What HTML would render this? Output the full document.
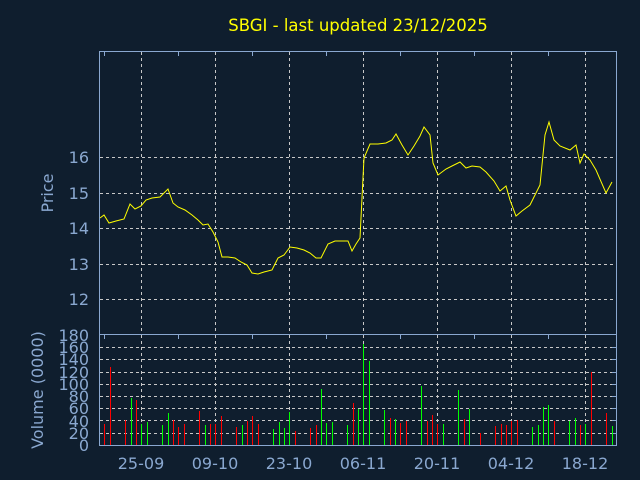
<!DOCTYPE html>
<html><head><style>
html,body{margin:0;padding:0;background:#0f1e2e;}
svg{display:block}
text{font-family:"DejaVu Sans","Liberation Sans",sans-serif;}
</style></head><body>
<svg width="640" height="480" viewBox="0 0 640 480" xmlns="http://www.w3.org/2000/svg">
<rect width="640" height="480" fill="#0f1e2e"/>
<text x="358" y="31" fill="#ffff00" font-size="16.5" text-anchor="middle">SBGI - last updated 23/12/2025</text>
<g stroke="#c8c8c8" stroke-width="1" stroke-dasharray="3,3" fill="none" shape-rendering="crispEdges">
<path d="M141.5 52V334M215.5 52V334M289.5 52V334M363.5 52V334M437.5 52V334M511.5 52V334M585.5 52V334"/>
<path d="M100 157.5H616M100 193.5H616M100 228.5H616M100 264.5H616M100 299.5H616"/>
<path d="M141.5 335V445M215.5 335V445M289.5 335V445M363.5 335V445M437.5 335V445M511.5 335V445M585.5 335V445"/>
<path d="M100 347.5H616M100 359.5H616M100 372.5H616M100 384.5H616M100 396.5H616M100 408.5H616M100 420.5H616M100 433.5H616"/>
</g>
<g stroke="#8aa8d0" stroke-width="1" fill="none" shape-rendering="crispEdges">
<rect x="99.5" y="51.5" width="517" height="394"/>
<path d="M99.5 334.5H616.5"/>
<path d="M104.5 52v4M178.5 52v4M252.5 52v4M326.5 52v4M400.5 52v4M474.5 52v4M548.5 52v4M104.5 335v4M178.5 335v4M252.5 335v4M326.5 335v4M400.5 335v4M474.5 335v4M548.5 335v4"/>
<path d="M612 347.5h4M612 359.5h4M612 372.5h4M612 384.5h4M612 396.5h4M612 408.5h4M612 420.5h4M612 433.5h4"/>
</g>
<polyline fill="none" stroke="#ffff00" stroke-width="1" points="100,218 104,215 109,223 116,221 124,219 130,204 135,209 141,206 146,200 152,198 160,197 164,193 168,189 173,203 178,207 185,210 192,215 198,220 203,225 208,224 213,232 218,242 222,257 228,257 235,258 241,262 247,265 252,273 258,274 264,272 272,270 278,258 284,255 290,247 297,248 304,250 310,253 316,258 321,258 328,244 335,241 342,241 348,241 352,251 356,244 360,238 364,158 370,144 378,144 386,143 392,140 396,134 402,145 408,155 414,146 420,136 424,127 430,135 433,163 438,175 446,169 452,166 460,162 466,168 472,166 480,167 486,172 494,181 500,191 506,186 510,200 516,216 522,211 530,205 535,195 540,185 545,135 549,122 554,140 560,146 570,150 576,145 580,163 584,154 590,160 596,170 606,193 612,182"/>
<g stroke-width="1" fill="none" shape-rendering="crispEdges">
<path stroke="#ff0000" d="M104.5 445V424M110.5 445V367M125.5 445V420M136.5 445V400M173.5 445V420M178.5 445V427M184.5 445V424M199.5 445V411M210.5 445V424M215.5 445V424M221.5 445V416M236.5 445V427M247.5 445V421M252.5 445V416M258.5 445V424M295.5 445V431M310.5 445V428M316.5 445V425M353.5 445V403M390.5 445V418M400.5 445V423M406.5 445V421M427.5 445V421M432.5 445V415M437.5 445V424M464.5 445V419M480.5 445V433M495.5 445V426M501.5 445V424M506.5 445V425M511.5 445V421M517.5 445V420M554.5 445V421M580.5 445V425M591.5 445V372M606.5 445V413"/>
<path stroke="#00ff00" d="M131.5 445V398M141.5 445V424M147.5 445V422M162.5 445V425M168.5 445V413M205.5 445V425M242.5 445V425M273.5 445V429M279.5 445V422M284.5 445V428M289.5 445V412M321.5 445V389M326.5 445V423M332.5 445V422M347.5 445V425M358.5 445V409M363.5 445V344M369.5 445V361M384.5 445V410M395.5 445V419M421.5 445V386M443.5 445V424M458.5 445V390M469.5 445V409M532.5 445V427M538.5 445V425M543.5 445V407M548.5 445V405M569.5 445V421M575.5 445V418M585.5 445V424M612.5 445V426"/>
</g>
<g fill="#8aa8d0" font-size="16" text-anchor="end">
<text x="89" y="163">16</text><text x="89" y="199">15</text><text x="89" y="234">14</text><text x="89" y="270">13</text><text x="89" y="305">12</text>
<text x="89" y="451">0</text><text x="89" y="439">20</text><text x="89" y="427">40</text><text x="89" y="414">60</text><text x="89" y="402">80</text><text x="89" y="390">100</text><text x="89" y="378">120</text><text x="89" y="365">140</text><text x="89" y="353">160</text><text x="89" y="341">180</text>
</g>
<g fill="#8aa8d0" font-size="16" text-anchor="middle">
<text x="141" y="469">25-09</text><text x="215" y="469">09-10</text><text x="289" y="469">23-10</text><text x="363" y="469">06-11</text><text x="437" y="469">20-11</text><text x="511" y="469">04-12</text><text x="585" y="469">18-12</text>
<text transform="translate(53,193) rotate(-90)">Price</text>
<text transform="translate(43,390) rotate(-90)">Volume (0000)</text>
</g>
</svg>
</body></html>
